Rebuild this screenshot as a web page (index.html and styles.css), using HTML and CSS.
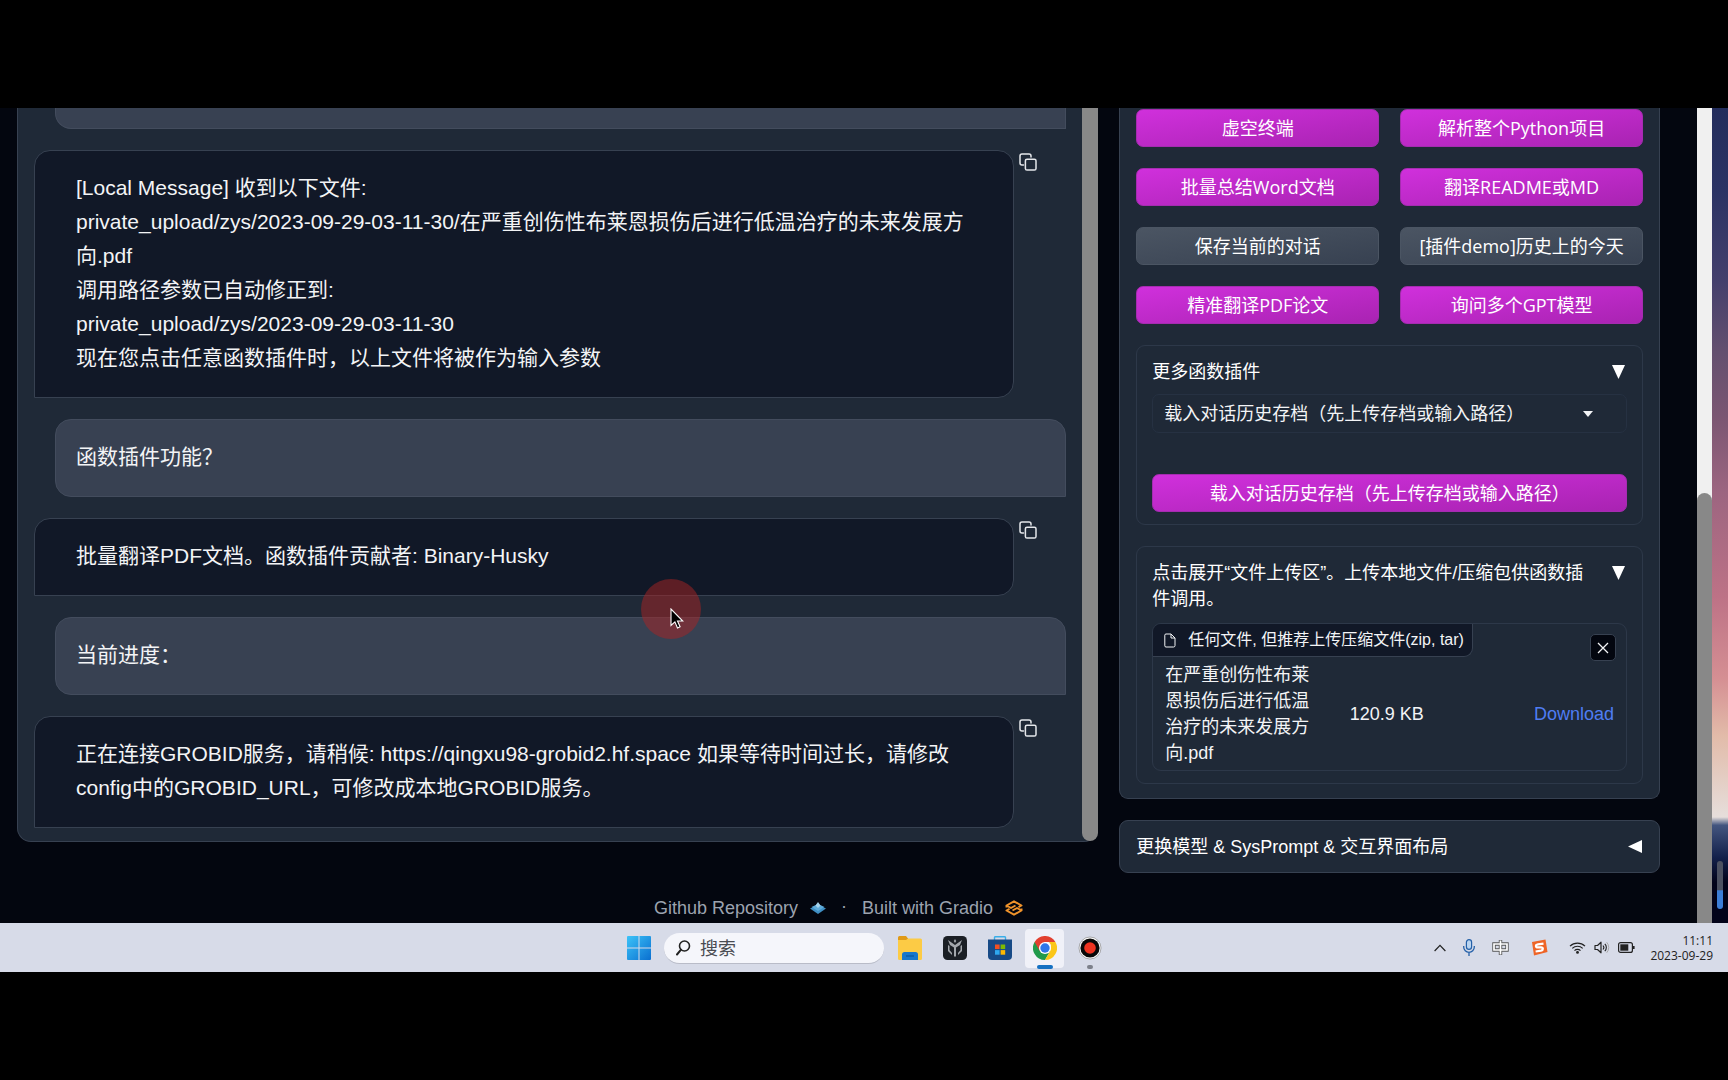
FILE: index.html
```html
<!DOCTYPE html>
<html lang="zh-CN">
<head>
<meta charset="utf-8">
<meta name="viewport" content="width=device-width, initial-scale=1">
<title>GPT 学术优化</title>
<link rel="stylesheet" href="styles.css">
</head>
<body>
<svg class="defs" aria-hidden="true">
  <symbol id="copy" viewBox="0 0 18 18"><path d="M4.500 12H3a2 2 0 0 1-2-2V3a2 2 0 0 1 2-2h7a2 2 0 0 1 2 2v1" fill="none" stroke="currentColor" stroke-width="1.500" stroke-linecap="round"/><rect x="6.400" y="6.200" width="10.600" height="10.800" rx="1.600" fill="none" stroke="currentColor" stroke-width="1.500"/></symbol>
  <symbol id="down" viewBox="0 0 13 14"><path d="M0 0h13L6.500 14z" fill="currentColor"/></symbol>
</svg>

<div class="desktop">
  <div class="browser">
    <div class="page">
      <main class="columns">
        <section class="chat">
          <div class="messages">
            <div class="user cut"></div>
            <div class="reply">
              <div class="bot">[Local Message] 收到以下文件:<br>private_upload/zys/2023-09-29-03-11-30/在严重创伤性布莱恩损伤后进行低温治疗的未来发展方向.pdf<br>调用路径参数已自动修正到:<br>private_upload/zys/2023-09-29-03-11-30<br>现在您点击任意函数插件时，以上文件将被作为输入参数</div>
              <button class="copy" aria-label="复制"><svg width="18" height="18"><use href="#copy"/></svg></button>
            </div>
            <div class="user">函数插件功能？</div>
            <div class="reply">
              <div class="bot">批量翻译PDF文档。函数插件贡献者: Binary-Husky</div>
              <button class="copy" aria-label="复制"><svg width="18" height="18"><use href="#copy"/></svg></button>
            </div>
            <div class="user">当前进度：</div>
            <div class="reply">
              <div class="bot">正在连接GROBID服务，请稍候: https://qingxu98-grobid2.hf.space 如果等待时间过长，请修改config中的GROBID_URL，可修改成本地GROBID服务。</div>
              <button class="copy" aria-label="复制"><svg width="18" height="18"><use href="#copy"/></svg></button>
            </div>
          </div>
          <div class="chat-scroll"></div>
        </section>

        <aside class="side">
          <div class="panel">
            <div class="plugins">
              <button class="btn primary">虚空终端</button>
              <button class="btn primary">解析整个Python项目</button>
              <button class="btn primary">批量总结Word文档</button>
              <button class="btn primary">翻译README或MD</button>
              <button class="btn">保存当前的对话</button>
              <button class="btn">[插件demo]历史上的今天</button>
              <button class="btn primary">精准翻译PDF论文</button>
              <button class="btn primary">询问多个GPT模型</button>
            </div>

            <section class="accordion">
              <button class="head"><span>更多函数插件</span><svg width="13" height="14"><use href="#down"/></svg></button>
              <div class="picker">
                <select aria-label="更多函数插件"><option>载入对话历史存档（先上传存档或输入路径）</option></select>
                <svg class="caret" width="10" height="6" viewBox="0 0 10 6"><path d="M0 0h10L5 6z" fill="currentColor"/></svg>
              </div>
              <button class="btn primary wide">载入对话历史存档（先上传存档或输入路径）</button>
            </section>

            <section class="accordion">
              <button class="head"><span>点击展开“文件上传区”。上传本地文件/压缩包供函数插件调用。</span><svg width="13" height="14"><use href="#down"/></svg></button>
              <div class="upload">
                <div class="upload-top">
                  <div class="upload-label">
                    <svg width="12" height="15" viewBox="0 0 12 15"><path d="M2 1h5l4 4v7.500a1.500 1.500 0 0 1-1.500 1.500h-7.500a1.200 1.200 0 0 1-1.200-1.200V2.200A1.200 1.200 0 0 1 2 1zM7 1v4h4" fill="none" stroke="currentColor"/></svg>
                    <span>任何文件, 但推荐上传压缩文件(zip, tar)</span>
                  </div>
                  <button class="close" aria-label="清除"><svg width="12" height="12" viewBox="0 0 12 12"><path d="M1 1l10 10M11 1L1 11" stroke="currentColor" stroke-width="1.300"/></svg></button>
                </div>
                <table class="files">
                  <tr><td class="name">在严重创伤性布莱恩损伤后进行低温治疗的未来发展方向.pdf</td><td>120.9 KB</td><td class="get"><a href="#download">Download</a></td></tr>
                </table>
              </div>
            </section>
          </div>
          <button class="head settings"><span>更换模型 &amp; SysPrompt &amp; 交互界面布局</span><svg width="14" height="13" viewBox="0 0 14 13"><path d="M14 0v13L0 6.500z" fill="currentColor"/></svg></button>
        </aside>
      </main>

      <footer class="footer">
        <a href="#repo">Github Repository
          <svg width="16" height="12" viewBox="0 0 16 12"><path d="M0 6.500L8 3l8 3.500L8 12z" fill="#3f8fc4"/><path d="M1.500 5L8 2l6.500 3L8 9z" fill="#5eabdb"/><path d="M5.500 3.500L8 0l2.500 3.500L8 6z" fill="#a5d4ee"/></svg></a>
        <span>·</span>
        <a href="#gradio">Built with Gradio
          <svg width="18" height="16" viewBox="0 0 18 16"><path d="M13.500 7.200L16.500 5.500 9 1.300 1.500 5.500 6 8l4.500-2.500M4.500 8.800L1.500 10.500 9 14.700l7.500-4.200L12 8l-4.500 2.500M1.500 5.500v2M16.500 8.500v2" fill="none" stroke="#f0932b" stroke-width="2" stroke-linejoin="round"/></svg></a>
      </footer>
    </div>
    <div class="page-scroll"><div class="thumb"></div></div>
    <div class="wallpaper"><div class="gauge"></div></div>
  </div>

  <div class="taskbar">
    <div class="apps">
      <button class="app" aria-label="开始"><svg width="24" height="24" viewBox="0 0 24 24"><defs><linearGradient id="win" x1="0" y1="0" x2="1" y2="1"><stop offset="0" stop-color="#3cc3f8"/><stop offset="1" stop-color="#0a6fd0"/></linearGradient></defs><path d="M1 0h10.500v11.500H0V1a1 1 0 0 1 1-1zM12.500 0H23a1 1 0 0 1 1 1v10.500H12.500zM0 12.500h11.500V24H1a1 1 0 0 1-1-1zM12.500 12.500H24V23a1 1 0 0 1-1 1H12.500z" fill="url(#win)"/></svg></button>
      <label class="search">
        <svg width="15" height="16" viewBox="0 0 15 16"><circle cx="8.500" cy="6" r="5" fill="none" stroke="#222" stroke-width="1.600"/><path d="M5 9.700L1 14.500" stroke="#222" stroke-width="2" stroke-linecap="round"/></svg>
        <input type="text" placeholder="搜索" aria-label="搜索">
      </label>
      <button class="app" aria-label="文件资源管理器"><svg width="24" height="24" viewBox="0 0 24 24"><path d="M0 1.500A1.500 1.500 0 0 1 1.500 0H8l2 2.500V6H0z" fill="#e09a17"/><path d="M0 4h8l2-1.500h12.500A1.500 1.500 0 0 1 24 4v18.500A1.500 1.500 0 0 1 22.500 24h-21A1.500 1.500 0 0 1 0 22.500z" fill="#fccb45"/><path d="M4 24v-5.500A2.500 2.500 0 0 1 6.500 16h11a2.500 2.500 0 0 1 2.500 2.500V24z" fill="#1777cc"/><path d="M8 20h8" stroke="#0d5ca8" stroke-width="1.500"/></svg></button>
      <button class="app" aria-label="应用"><svg width="24" height="24" viewBox="0 0 24 24"><rect width="24" height="24" rx="4.500" fill="#1b1f25"/><path d="M5 4l7 5 7-5-2 5-4 2.500V20l-1 1-1-1v-8.500L7 9zM5 9v6l4 4v-2l-2.500-3v-4zM19 9v6l-4 4v-2l2.500-3v-4zM12 3l1.200 2L12 7l-1.200-2z" fill="#a3a7ac"/></svg></button>
      <button class="app" aria-label="Microsoft Store"><svg width="24" height="24" viewBox="0 0 24 24"><path d="M6.500 4V1.500A1 1 0 0 1 7.500.7h9a1 1 0 0 1 1 .8V4" fill="none" stroke="#3aaee8" stroke-width="1.400"/><path d="M0 3.500h24V20a4 4 0 0 1-4 4H4a4 4 0 0 1-4-4z" fill="#174a86"/><path d="M7 8.500h4.600v4.600H7z" fill="#f25022"/><path d="M12.600 8.500h4.600v4.600h-4.600z" fill="#7fba00"/><path d="M7 14.100h4.600v4.600H7z" fill="#2fa8ef"/><path d="M12.600 14.100h4.600v4.600h-4.600z" fill="#ffb900"/></svg></button>
      <button class="app active" aria-label="Google Chrome"><svg width="24" height="24" viewBox="0 0 24 24"><path d="M12 12L12 24A12 12 0 0 1 1.600 6z" fill="#219a4b"/><path d="M1.600 6L6.800 15l5.200 9 5.200-9-5-3z" fill="#219a4b"/><path d="M12 6h10.400A12 12 0 0 0 1.600 6l5.200 9z" fill="#e2402f"/><path d="M12 24l5.200-9L18 9l-2-3h6.400A12 12 0 0 1 12 24z" fill="#fbc618"/><circle cx="12" cy="12" r="6" fill="#fff"/><circle cx="12" cy="12" r="4.700" fill="#2f76e8"/></svg></button>
      <button class="app running" aria-label="录屏"><svg width="24" height="24" viewBox="0 0 24 24"><circle cx="12" cy="12" r="11" fill="#fff" stroke="#777" stroke-width=".6"/><circle cx="12" cy="12" r="9.600" fill="#080808"/><circle cx="12" cy="12" r="5.800" fill="#ee3320"/></svg></button>
    </div>
    <div class="tray">
      <svg width="12" height="8" viewBox="0 0 12 8"><path d="M.6 7L6 1.300 11.400 7" fill="none" stroke="#222" stroke-width="1.200"/></svg>
      <svg class="mic" width="12" height="17" viewBox="0 0 12 17"><rect x="3.400" y=".7" width="5.200" height="9.600" rx="2.600" fill="#b9d4f0" stroke="#2460a8" stroke-width="1.200"/><path d="M.7 7v1a5.300 5.300 0 0 0 10.600 0V7M6 13.300V17" fill="none" stroke="#2460a8" stroke-width="1.300"/></svg>
      <svg class="ime" width="17" height="17" viewBox="0 0 17 17"><path d="M8.500 1v15M2 5h13v6H2z" fill="none" stroke="#555" stroke-width="3.400"/><path d="M8.500 1.500v14M2 5h13v6H2z" fill="none" stroke="#fff" stroke-width="1.700"/></svg>
      <svg class="sogou" width="17" height="17" viewBox="0 0 17 17"><path d="M1 3L14.500.5 16.500 13 3 16.500z" fill="#ee6426"/><path d="M12.500 4.600L7 5.400c-3 .6-2.500 3 0 3h3c2.600 0 2.300 2.900 0 3.300l-5.400.8" fill="none" stroke="#fff" stroke-width="2.200"/></svg>
      <svg class="wifi" width="17" height="13" viewBox="0 0 17 13"><path d="M1 5.200a10.600 10.600 0 0 1 15 0M3.300 7.400a7.400 7.400 0 0 1 10.400 0M5.500 9.600a4.200 4.200 0 0 1 6 0" fill="none" stroke="#222" stroke-width="1.200"/><circle cx="8.500" cy="11.400" r="1.400" fill="#222"/></svg>
      <svg width="16" height="13" viewBox="0 0 16 13"><path d="M1 4.500h2.500L7 1.200v10.600L3.500 8.500H1z" fill="none" stroke="#222" stroke-width="1.200" stroke-linejoin="round"/><path d="M9 4.500a3 3 0 0 1 0 4M10.800 2.800a5.200 5.200 0 0 1 0 7.400" fill="none" stroke="#222" stroke-width="1.100"/><path d="M12.700 1.200a8 8 0 0 1 0 10.600" fill="none" stroke="#aaa"/></svg>
      <svg width="17" height="11" viewBox="0 0 17 11"><rect x=".6" y=".6" width="13.800" height="9.800" rx="2" fill="none" stroke="#222" stroke-width="1.200"/><path d="M2.300 2.300h8v6.400h-8z" fill="#222"/><path d="M15.800 4v3" stroke="#222" stroke-width="1.600"/></svg>
      <div class="clock"><time>11:11</time><time>2023-09-29</time></div>
    </div>
  </div>

  <div class="pointer"><svg width="14" height="22" viewBox="0 0 14 22"><path d="M1 1v16.500l3.900-3.600 2.600 6 2.600-1.200-2.600-5.700h5.300z" fill="#000" stroke="#fff" stroke-width="1.100"/></svg></div>
</div>
</body>
</html>
```

FILE: styles.css
```css
* { box-sizing: border-box; }

body {
  margin: 0;
  min-height: 100vh;
  padding: 10vh 0;
  background: #000;
  color: #f3f4f6;
  font: 18px/26px "Liberation Sans", "Noto Sans CJK SC", sans-serif;
}

button, input, select { font: inherit; color: inherit; margin: 0; border: 0; background: none; padding: 0; }
a { color: inherit; text-decoration: none; }
svg { display: block; flex: none; }
.defs { position: absolute; width: 0; height: 0; }

.desktop { position: relative; display: flex; flex-direction: column; min-height: 80vh; }
.browser { flex: 1; display: flex; background: #03060f; }
.page { flex: 1; min-width: 0; padding: 0 37px 0 17px; }
.columns { display: grid; grid-template-columns: 2fr 1fr; gap: 21px; align-items: start; }

/* Conversation */
.chat {
  display: flex;
  background: #1f2937;
  border: 1px solid #374151;
  border-width: 0 0 1px 1px;
  border-radius: 0 0 14px 14px;
}
.messages { flex: 1; display: flex; flex-direction: column; gap: 21px; padding: 0 16px 13px; font-size: 21px; line-height: 34px; }
.user, .bot { padding: 20px 20px 22px; border: 1px solid #434c5d; border-radius: 16px; }
.user { margin-left: 21px; background: #384152; border-bottom-right-radius: 0; }
.cut { height: 21px; padding: 0; border-top: 0; border-radius: 0 0 0 16px; }
.reply { display: flex; align-items: flex-start; gap: 5px; padding-right: 29px; }
.bot { flex: 1; padding-left: 41px; padding-right: 41px; background: #111827; border-color: #374151; border-bottom-left-radius: 0; overflow-wrap: anywhere; }
.copy { margin-top: 3px; color: #e5e7eb; }
.chat-scroll { width: 16px; background: #888; border-radius: 0 0 8px 8px; }

/* Plugins */
.side { display: grid; gap: 21px; }
.panel {
  display: grid;
  gap: 21px;
  padding: 1px 16px 14px;
  background: #1f2937;
  border: 1px solid #374151;
  border-top: 0;
  border-radius: 0 0 9px 9px;
}
.plugins { display: grid; grid-template-columns: 1fr 1fr; gap: 21px; }
.btn {
  height: 38px;
  border: 1px solid #4b5563;
  border-radius: 7px;
  background: linear-gradient(to bottom right, #4b5563, #374151);
  color: #fff;
  font-family: "Open Sans", "Noto Sans CJK SC", sans-serif;
  white-space: nowrap;
}
.primary { border-color: #a52cb0; background: linear-gradient(to bottom right, #d030dc, #a923b2); }
.wide { margin-top: 41px; }
.accordion { display: flex; flex-direction: column; padding: 13px 15px 12px; border: 1px solid #2d3849; border-radius: 9px; }
.head { display: flex; justify-content: space-between; gap: 18px; text-align: left; color: #fff; padding-right: 2px; }
.head svg { margin-top: 6px; }
.picker { position: relative; display: flex; margin-top: 9px; }
.picker select { flex: 1; height: 39px; padding: 0 11px; border: 1px solid #263142; border-radius: 7px; appearance: none; background: #1f2937; }
.caret { position: absolute; right: 34px; top: 17px; pointer-events: none; }
.upload { margin-top: 11px; padding-bottom: 4px; border: 1px solid #2d3849; border-radius: 9px; }
.upload-top { display: flex; justify-content: space-between; align-items: flex-start; padding-right: 10px; }
.upload-label {
  display: flex;
  align-items: center;
  gap: 12px;
  height: 33px;
  padding: 0 8px 0 11px;
  border: 1px solid #374151;
  border-width: 0 1px 1px 0;
  border-radius: 8px 0 9px 0;
  background: #111827;
  font-size: 16px;
}
.close { display: grid; place-items: center; width: 26px; height: 27px; margin-top: 10px; border: 1px solid #374151; border-radius: 5px; background: #03060f; }
.files { width: 100%; margin-top: 1px; border-collapse: collapse; table-layout: fixed; }
.files td { padding: 0 12px; }
.files .name { width: 39%; }
.files .get { text-align: right; color: #4f7df3; }
.settings { align-items: center; height: 53px; padding: 0 17px 0 16px; border: 1px solid #374151; border-radius: 9px; background: #1f2937; }
.settings svg { margin: 0; }

.footer { display: flex; justify-content: center; gap: 15px; height: 49px; padding-top: 20px; color: #9ca3af; }
.footer a { display: flex; align-items: center; gap: 12px; }

/* Window scrollbar and the strip of desktop beside it */
.page-scroll { width: 15px; display: flex; flex-direction: column; background: #f0f0f0; }
.thumb { flex: 1; margin-top: 385px; background: #888; border-radius: 8px 8px 0 0; }
.wallpaper {
  display: flex;
  align-items: flex-end;
  justify-content: center;
  width: 16px;
  padding-bottom: 14px;
  background: linear-gradient(#232d5c, #2b3364 10%, #433f6c 21%, #64506f 30%, #7b5672 38%, #9c6580 47%, #bd7286 60%, #d58f93 70%, #e2bba9 77%, #e6dedb 87%, #43557f 88%, #13204a 92%, #02031a 95%);
}
.gauge { width: 6px; height: 48px; border-radius: 3px; background: linear-gradient(#4c5161 60%, #3c7ed8 62%); }

/* Taskbar */
.taskbar { display: grid; grid-template-columns: 1fr auto 1fr; align-items: center; height: 49px; background: #d7dbe8; color: #222; }
.apps { grid-column: 2; display: flex; align-items: center; gap: 6px; padding-top: 1px; }
.app { position: relative; display: grid; place-items: center; width: 39px; height: 39px; border-radius: 4px; }
.active { background: #f0f1f8; }
.active::after, .running::after { content: ""; position: absolute; bottom: -1px; width: 16px; height: 4px; border-radius: 2px; background: #1470c2; }
.running::after { width: 6px; background: #7c808a; }
.search { display: flex; align-items: center; gap: 9px; width: 220px; height: 31px; padding: 0 12px; border-radius: 16px; background: #f5f6fb; border-bottom: 1px solid #b9bcc8; }
.search input { flex: 1; min-width: 0; padding-top: 3px; outline: 0; }
.search input::placeholder { color: #4a4c52; opacity: 1; }
.tray { display: flex; align-items: center; justify-content: flex-end; gap: 8px; padding-right: 15px; }
.mic { margin-left: 9px; }
.ime { margin: 0 14px 0 9px; }
.wifi { margin-left: 13px; }
.clock { display: grid; margin-left: 7px; text-align: right; font: 12px/15px "Open Sans", sans-serif; }

/* Recorded mouse pointer with its click halo */
.pointer { position: absolute; left: 671px; top: 501px; width: 60px; height: 60px; margin: -30px 0 0 -30px; padding: 29px 0 0 29px; border-radius: 50%; background: rgba(170, 35, 35, .5); }
```
